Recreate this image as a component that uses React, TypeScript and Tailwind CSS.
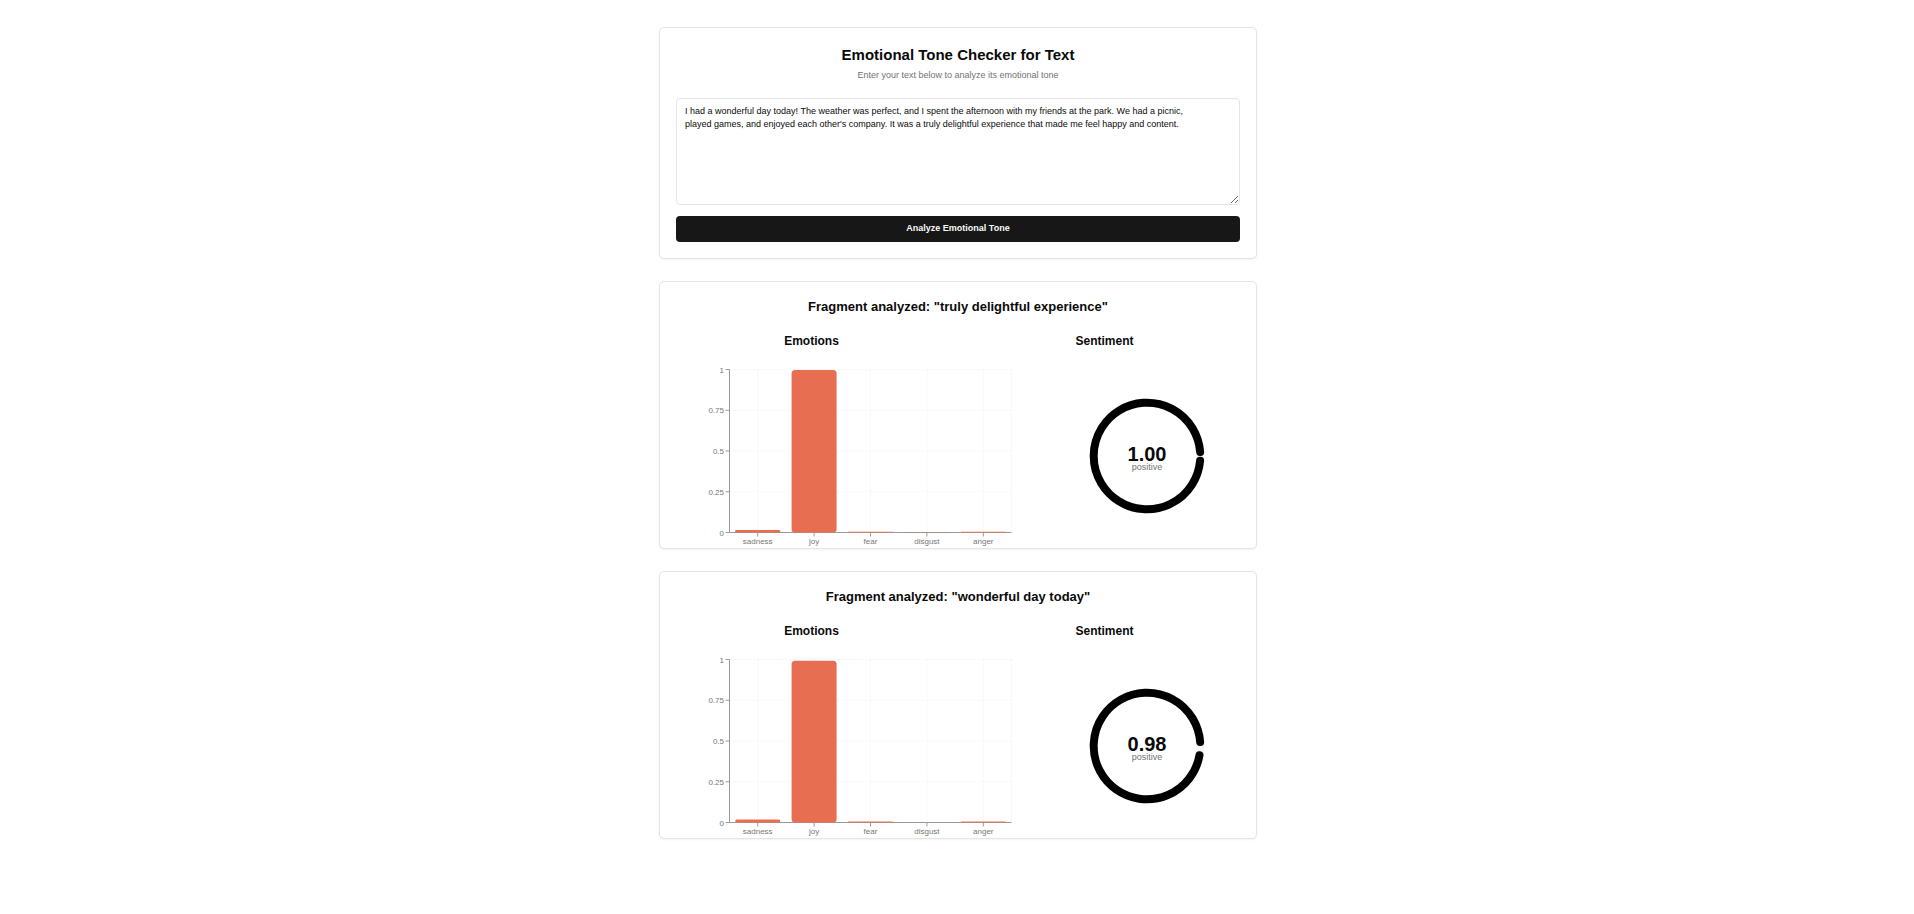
import { useState } from "react";

type Emotion = { name: string; score: number };
type Fragment = { text: string; emotions: Emotion[]; sentiment: number; label: string; arc: number };

const fragments: Fragment[] = [
  {
    text: "truly delightful experience",
    emotions: [
      { name: "sadness", score: 0.016 },
      { name: "joy", score: 0.997 },
      { name: "fear", score: 0.004 },
      { name: "disgust", score: 0.002 },
      { name: "anger", score: 0.004 },
    ],
    sentiment: 1.0,
    label: "positive",
    arc: 0.9975,
  },
  {
    text: "wonderful day today",
    emotions: [
      { name: "sadness", score: 0.019 },
      { name: "joy", score: 0.992 },
      { name: "fear", score: 0.006 },
      { name: "disgust", score: 0 },
      { name: "anger", score: 0.006 },
    ],
    sentiment: 0.98,
    label: "positive",
    arc: 0.984,
  },
];

const plot = { left: 53.5, top: 9.5, width: 282, height: 163 };
const yTicks = [0, 0.25, 0.5, 0.75, 1];

function EmotionChart({ data }: { data: Emotion[] }) {
  const band = plot.width / data.length;
  const bottom = plot.top + plot.height;
  const right = plot.left + plot.width;
  const yOf = (v: number) => bottom - v * plot.height;
  const xOf = (i: number) => plot.left + band * (i + 0.5);
  return (
    <svg width="350" height="188" viewBox="0 0 350 188" role="img" aria-label="Emotions bar chart">
      <g stroke="#f3f3f3" strokeDasharray="2 2">
        {yTicks.slice(1).map((t) => (
          <line key={t} x1={plot.left} x2={right} y1={yOf(t)} y2={yOf(t)} />
        ))}
        {data.map((d, i) => (
          <line key={d.name} x1={xOf(i)} x2={xOf(i)} y1={plot.top} y2={bottom} />
        ))}
        <line x1={right} x2={right} y1={plot.top} y2={bottom} />
      </g>
      <g stroke="#999999">
        <line x1={plot.left} x2={right} y1={bottom} y2={bottom} />
        <line x1={plot.left} x2={plot.left} y1={plot.top} y2={bottom} />
        {yTicks.map((t) => (
          <line key={t} x1={plot.left - 4} x2={plot.left} y1={yOf(t)} y2={yOf(t)} />
        ))}
        {data.map((d, i) => (
          <line key={d.name} x1={xOf(i)} x2={xOf(i)} y1={bottom} y2={bottom + 4} />
        ))}
      </g>
      {data.map((d, i) => {
        const h = d.score * plot.height;
        return (
          <rect
            key={d.name}
            x={xOf(i) - 22.5}
            y={bottom - h}
            width={45}
            height={h}
            rx={Math.min(3.5, h / 2)}
            fill="#e76e50"
          />
        );
      })}
      <g fill="#777777" className="text-[8px]">
        {yTicks.map((t) => (
          <text key={t} x={48} y={yOf(t) + 3} textAnchor="end">
            {t}
          </text>
        ))}
        {data.map((d, i) => (
          <text key={d.name} x={xOf(i)} y={184} textAnchor="middle">
            {d.name}
          </text>
        ))}
      </g>
    </svg>
  );
}

function SentimentRing({ value, label, arc }: { value: number; label: string; arc: number }) {
  const r = 53.3;
  const cap = 4 / r;
  const end = arc * 2 * Math.PI - cap;
  const point = (a: number) => `${58 + r * Math.cos(a)} ${58 - r * Math.sin(a)}`;
  return (
    <svg width="116" height="116" viewBox="0 0 116 116" role="img" aria-label="Sentiment score">
      <circle cx="58" cy="58" r={r} fill="none" stroke="#f4f4f5" strokeWidth="8" />
      <path
        d={`M${point(cap)}A${r} ${r} 0 1 0 ${point(end)}`}
        fill="none"
        stroke="#000000"
        strokeWidth="8"
        strokeLinecap="round"
      />
      <text x="58" y="63" textAnchor="middle" fill="#0a0a0a" className="text-[20px] font-bold">
        {value.toFixed(2)}
      </text>
      <text x="58" y="72" textAnchor="middle" fill="#737373" className="text-[9px]">
        {label}
      </text>
    </svg>
  );
}

function FragmentCard({ fragment }: { fragment: Fragment }) {
  return (
    <section className="rounded-[5px] border border-[#e5e5e5] bg-white px-4 pt-4 shadow-xs">
      <h2 className="text-center text-[13px] leading-[18px] font-bold">
        Fragment analyzed: "{fragment.text}"
      </h2>
      <div className="mt-4 grid grid-cols-2 gap-[22px] text-center text-[12px] leading-[18px] font-bold">
        <h3>Emotions</h3>
        <h3>Sentiment</h3>
      </div>
      <div className="mt-[10px] flex items-start justify-between pr-[35px]">
        <EmotionChart data={fragment.emotions} />
        <div className="mt-[38px]">
          <SentimentRing value={fragment.sentiment} label={fragment.label} arc={fragment.arc} />
        </div>
      </div>
    </section>
  );
}

export default function App() {
  const [text, setText] = useState(
    "I had a wonderful day today! The weather was perfect, and I spent the afternoon with my friends at the park. We had a picnic, played games, and enjoyed each other's company. It was a truly delightful experience that made me feel happy and content.",
  );
  return (
    <main className="bg-white py-[27px] pr-4 pl-[18px] font-['Liberation_Sans',Arial,sans-serif] text-[#0a0a0a]">
      <div className="mx-auto flex max-w-[598px] flex-col gap-[22px]">
        <section className="rounded-[5px] border border-[#e5e5e5] bg-white p-4 shadow-xs">
          <h1 className="text-center text-[15px] leading-[22px] font-bold">Emotional Tone Checker for Text</h1>
          <p className="mt-0.5 text-center text-[9px] leading-[14px] text-[#737373]">
            Enter your text below to analyze its emotional tone
          </p>
          <textarea
            aria-label="Text to analyze"
            value={text}
            onChange={(e) => setText(e.target.value)}
            className="mt-4 block h-[107px] w-full resize-y rounded-[4px] border border-[#e5e5e5] bg-white py-1.5 pr-10 pl-2 text-[9px] leading-[13px] outline-none"
          />
          <button
            type="button"
            className="mt-[11px] block h-[26px] w-full rounded-[4px] bg-[#171717] pb-0.5 text-[9px] leading-[14px] font-semibold text-[#fafafa]"
          >
            Analyze Emotional Tone
          </button>
        </section>
        {fragments.map((f) => (
          <FragmentCard key={f.text} fragment={f} />
        ))}
      </div>
    </main>
  );
}
